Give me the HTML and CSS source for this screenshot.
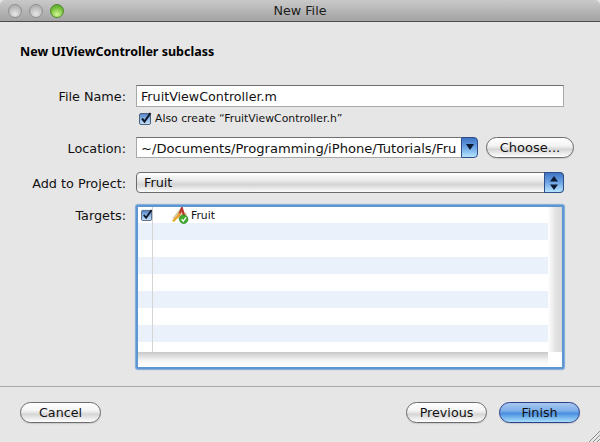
FILE: index.html
```
<!DOCTYPE html>
<html lang="en">
<head>
<meta charset="utf-8">
<title>New File</title>
<link rel="stylesheet" href="styles.css">
</head>
<body>
<div class="window">
  <header class="titlebar">
    <div class="lights"><span class="light"></span><span class="light"></span><span class="light green"></span></div>
    <div class="title">New File</div>
  </header>
  <main class="content">
    <h1 class="heading">New UIViewController subclass</h1>
    <div class="form">
      <label class="label">File Name:</label>
      <div class="textfield">FruitViewController.m</div>

      <div></div>
      <div class="check-row">
        <svg class="checkbox" viewBox="0 0 13 13" width="13" height="13"><defs><linearGradient id="cb" x1="0" y1="0" x2="0" y2="1"><stop offset="0" stop-color="#4d7fc4"/><stop offset=".5" stop-color="#8fb8e8"/><stop offset="1" stop-color="#c8e2fb"/></linearGradient></defs><rect x=".5" y="1.5" width="11" height="11" rx="1.5" fill="url(#cb)" stroke="#50627e"/><path d="M3 6.5 L5.5 9.5 L11.5 1" fill="none" stroke="#101828" stroke-width="2"/></svg>
        <span>Also create “FruitViewController.h”</span>
      </div>

      <label class="label">Location:</label>
      <div class="location-row">
        <div class="combo">
          <div class="combo-text">~/Documents/Programming/iPhone/Tutorials/Fru</div>
          <div class="combo-arrow"><svg viewBox="0 0 8 6" width="8" height="6"><path d="M0 0H8L4 6Z" fill="#0c1a33"/></svg></div>
        </div>
        <button class="btn choose">Choose...</button>
      </div>

      <label class="label">Add to Project:</label>
      <div class="select">
        <div class="select-text">Fruit</div>
        <div class="select-arrow"><svg viewBox="0 0 8 14" width="8" height="14"><path d="M0 5.5H8L4 0Z M0 8.5H8L4 14Z" fill="#0c1a33"/></svg></div>
      </div>

      <label class="label targets-label">Targets:</label>
      <div class="targets">
        <div class="table">
          <div class="rows">
            <div class="row first">
              <svg class="checkbox" viewBox="0 0 13 13" width="12" height="12"><rect x=".5" y="1.5" width="11" height="11" rx="1.5" fill="url(#cb)" stroke="#50627e"/><path d="M3 6.5 L5.5 9.5 L11.5 1" fill="none" stroke="#101828" stroke-width="2"/></svg>
              <svg class="app-icon" viewBox="0 0 17 17" width="18" height="18">
                <path d="M1 12 L8 3 L15 7 L14 12 Z" fill="#d9c9a0"/>
                <path d="M6 10 L9.5 1 L11 1 L14 11 L12 11 L10 5 L8 10 Z" fill="#b8342c"/>
                <path d="M1 14 L8 6.5 L9.5 7.5 L3 15 Z" fill="#e8a72a"/>
                <circle cx="12" cy="12.5" r="4" fill="#3fae2e" stroke="#1f7a1a" stroke-width=".6"/>
                <path d="M10 12.5 L11.6 14.3 L14.2 10.8" fill="none" stroke="#fff" stroke-width="1.2"/>
              </svg>
              <span class="row-text">Fruit</span>
            </div>
            <div class="row alt"></div><div class="row"></div><div class="row alt"></div><div class="row"></div><div class="row alt"></div><div class="row"></div><div class="row alt"></div>
          </div>
          <div class="scrollcol"></div>
        </div>
        <div class="bottom"></div>
      </div>
    </div>
  </main>
  <footer class="footer">
    <button class="btn wide">Cancel</button>
    <div class="footer-right">
      <button class="btn wide">Previous</button>
      <button class="btn wide primary">Finish</button>
    </div>
    <svg class="grip" viewBox="0 0 12 12" width="12" height="12"><path d="M1 12 L12 1 M5 12 L12 5 M9 12 L12 9" stroke="#8e8e8e" fill="none"/></svg>
  </footer>
</div>
</body>
</html>
```

FILE: styles.css
```
* { box-sizing: border-box; }
html, body { margin: 0; padding: 0; }
body { width: 600px; height: 442px; overflow: hidden; background: #e6e6e6; font-family: "DejaVu Sans", sans-serif; font-size: 12.8px; color: #111; }
.window { width: 600px; height: 442px; display: flex; flex-direction: column; position: relative; }

.titlebar { height: 22px; flex: none; display: grid; grid-template-columns: 1fr auto 1fr; align-items: center; background: linear-gradient(#c9c9c9, #a3a3a3); border-bottom: 1px solid #4d4d4d; border-radius: 5px 5px 0 0; }
.lights { display: flex; gap: 7px; padding-left: 8px; }
.light { width: 14px; height: 14px; border-radius: 50%; border: 1px solid #8e8e8e; background: radial-gradient(circle at 50% 75%, #e6e6e6, #b4b4b4 70%); }
.light.green { border-color: #4f8a2a; background: radial-gradient(circle at 50% 80%, #d4f79a, #76bf3a 60%, #4e9a24); }
.title { font-size: 12.7px; color: #1c1c1c; }

.content { flex: none; height: 365px; padding: 23px 36px 0 20px; border-bottom: 1px solid #a9a9a9; }
.heading { margin: 0 0 26px; font-family: "Noto Sans", sans-serif; font-size: 12.5px; line-height: 14px; font-weight: bold; color: #000; }
.form { display: grid; grid-template-columns: 106px 428px; column-gap: 10px; }
.label { text-align: right; height: 21px; line-height: 23px; font-size: 12.8px; }
.targets-label { line-height: 21px; }
.textfield { height: 22px; line-height: 22px; background: #fff; border: 1px solid #a8a8a8; border-top-color: #6f6f6f; padding-left: 4px; font-size: 12.7px; }
.check-row { height: 30px; display: flex; align-items: flex-start; padding: 5px 0 0 3px; gap: 3px; font-size: 10.85px; line-height: 14px; }
.checkbox { flex: none; }

.location-row { display: flex; height: 35px; gap: 8px; width: 438px; }
.combo { display: flex; width: 342px; height: 21px; }
.combo-text { flex: 1; min-width: 0; white-space: nowrap; overflow: hidden; background: #fff; border: 1px solid #a8a8a8; border-top-color: #6f6f6f; border-right: none; padding-left: 4px; line-height: 21px; font-size: 13.1px; }
.combo-arrow { width: 17px; display: flex; justify-content: center; padding-top: 6px; border: 1px solid #2e4f8a; border-radius: 0 4px 4px 0; background: linear-gradient(#3f74c4, #6ea4e4 50%, #b6e4ff); }
.btn { font-family: "DejaVu Sans", sans-serif; font-size: 12.7px; color: #111; height: 21px; padding: 0 0 1px; border: 1px solid #6c6c6c; border-radius: 11px; background: linear-gradient(#fff 0, #f4f4f4 40%, #d6d6d6 60%, #ffffff 100%); box-shadow: 0 1px 1px rgba(0,0,0,.12); }
.choose { width: 88px; font-size: 13px; }
.select { height: 33px; position: relative; }
.select-text { height: 21px; border: 1px solid #6c6c6c; border-radius: 4px; background: linear-gradient(#fff, #e9e9e9 40%, #d4d4d4 60%, #fbfbfb); padding-left: 7px; line-height: 20px; font-size: 12.8px; }
.select-arrow { position: absolute; top: 0; right: 0; width: 20px; height: 21px; display: flex; align-items: center; justify-content: center; border: 1px solid #2e4f8a; border-radius: 0 4px 4px 0; background: linear-gradient(#3f74c4, #6ea4e4 50%, #b6e4ff); }

.targets { height: 164px; border: 2px solid #5d97d3; border-radius: 2px; background: #fff; display: flex; flex-direction: column; box-shadow: 0 0 1px 1px rgba(90,145,210,.75); }
.table { display: flex; height: 145px; }
.rows { flex: 1; background: linear-gradient(to right, transparent 14px, #d4d4d4 14px, #d4d4d4 15px, transparent 15px); }
.row { height: 17px; display: flex; align-items: center; }
.row.first { height: 16px; }
.row.alt { background: linear-gradient(to right, #ebf1fb 14px, #d4d4d4 14px, #d4d4d4 15px, #ebf1fb 15px); }
.row.first .checkbox { margin-left: 3px; }
.app-icon { margin-left: 18px; flex: none; }
.row-text { margin-left: 2px; font-size: 10.8px; }
.scrollcol { width: 14px; flex: none; background: linear-gradient(to right, #fff, #e4e4e4 50%, #d8d8d8); }
.bottom { flex: 1; background: linear-gradient(to right, transparent calc(100% - 14px), #fff 0), linear-gradient(#c8c8c8, #f4f4f4 55%, #fff); }

.footer { flex: 1; display: flex; justify-content: space-between; align-items: flex-start; padding: 15px 20px 0; position: relative; }
.footer-right { display: flex; gap: 12px; }
.wide { width: 81px; }
.primary { border-color: #2b3f8c; background: linear-gradient(#a8c8ef 0, #7fb0ea 40%, #4a8ee0 55%, #a9e0fb 100%); }
.grip { position: absolute; right: 0; bottom: 0; }
```
